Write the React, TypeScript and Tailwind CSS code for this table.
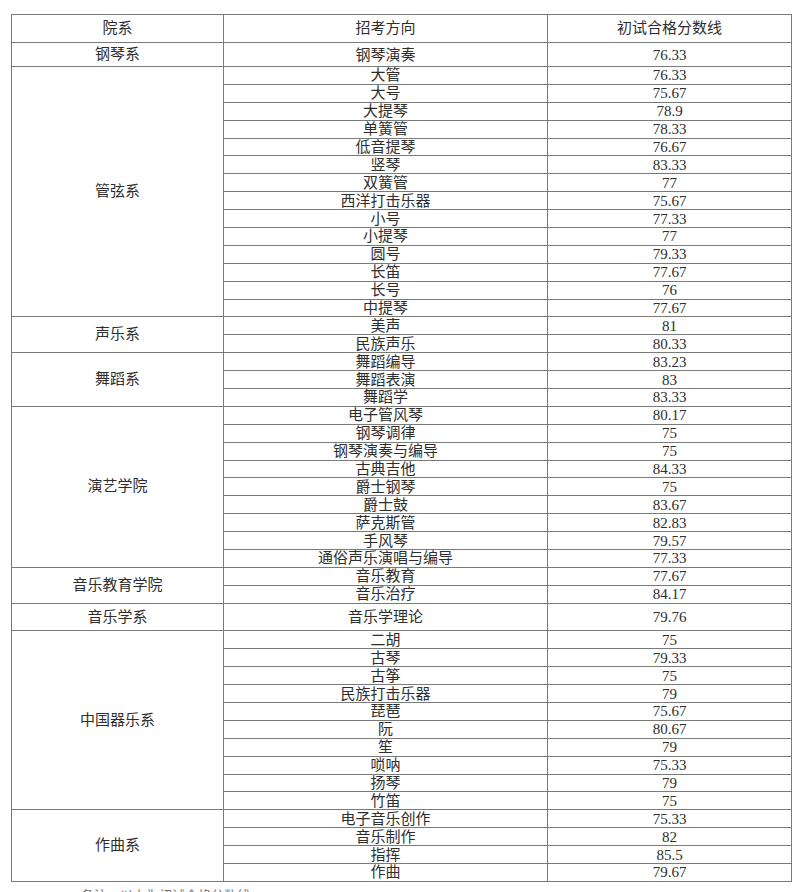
type Group = { dept: string; tall?: string; rows: [string, string][] };

// 行高はスクショから実測 (小行 ≈ 17.9px)
const GROUPS: Group[] = [
  { dept: "钢琴系", tall: "h-[24px]", rows: [["钢琴演奏", "76.33"]] },
  {
    dept: "管弦系",
    rows: [
      ["大管", "76.33"],
      ["大号", "75.67"],
      ["大提琴", "78.9"],
      ["单簧管", "78.33"],
      ["低音提琴", "76.67"],
      ["竖琴", "83.33"],
      ["双簧管", "77"],
      ["西洋打击乐器", "75.67"],
      ["小号", "77.33"],
      ["小提琴", "77"],
      ["圆号", "79.33"],
      ["长笛", "77.67"],
      ["长号", "76"],
      ["中提琴", "77.67"],
    ],
  },
  { dept: "声乐系", rows: [["美声", "81"], ["民族声乐", "80.33"]] },
  { dept: "舞蹈系", rows: [["舞蹈编导", "83.23"], ["舞蹈表演", "83"], ["舞蹈学", "83.33"]] },
  {
    dept: "演艺学院",
    rows: [
      ["电子管风琴", "80.17"],
      ["钢琴调律", "75"],
      ["钢琴演奏与编导", "75"],
      ["古典吉他", "84.33"],
      ["爵士钢琴", "75"],
      ["爵士鼓", "83.67"],
      ["萨克斯管", "82.83"],
      ["手风琴", "79.57"],
      ["通俗声乐演唱与编导", "77.33"],
    ],
  },
  { dept: "音乐教育学院", rows: [["音乐教育", "77.67"], ["音乐治疗", "84.17"]] },
  { dept: "音乐学系", tall: "h-[27.7px]", rows: [["音乐学理论", "79.76"]] },
  {
    dept: "中国器乐系",
    rows: [
      ["二胡", "75"],
      ["古琴", "79.33"],
      ["古筝", "75"],
      ["民族打击乐器", "79"],
      ["琵琶", "75.67"],
      ["阮", "80.67"],
      ["笙", "79"],
      ["唢呐", "75.33"],
      ["扬琴", "79"],
      ["竹笛", "75"],
    ],
  },
  {
    dept: "作曲系",
    rows: [
      ["电子音乐创作", "75.33"],
      ["音乐制作", "82"],
      ["指挥", "85.5"],
      ["作曲", "79.67"],
    ],
  },
];

const cell = "border border-[#7a7a7a] p-0 text-center align-middle";

export default function App() {
  return (
    <div className="w-[800px] h-[892px] overflow-hidden bg-white pt-[14px] pl-[11px] font-['Liberation_Serif','Noto_Sans_CJK_SC',serif] text-[15px] leading-[15px] text-[#2e2e2e]">
      <table className="table-fixed border-collapse w-[780px]">
        <colgroup>
          <col className="w-[212px]" />
          <col className="w-[324px]" />
          <col className="w-[244px]" />
        </colgroup>
        <thead>
          <tr className="h-[28px]">
            <th className={`${cell} font-normal`}>院系</th>
            <th className={`${cell} font-normal`}>招考方向</th>
            <th className={`${cell} font-normal`}>初试合格分数线</th>
          </tr>
        </thead>
        <tbody>
          {GROUPS.map((g) =>
            g.rows.map(([major, score], i) => (
              <tr key={g.dept + major} className={g.tall ?? "h-[17.9px]"}>
                {i === 0 && (
                  <td rowSpan={g.rows.length} className={cell}>
                    {g.dept}
                  </td>
                )}
                <td className={`${cell} pt-[1px]`}>{major}</td>
                <td className={`${cell} pt-[1px]`}>{score}</td>
              </tr>
            ))
          )}
        </tbody>
      </table>
      <div className="pl-[70px] pt-[6px] text-[13px] leading-[15px] text-[#777]">备注：以上为初试合格分数线</div>
    </div>
  );
}
